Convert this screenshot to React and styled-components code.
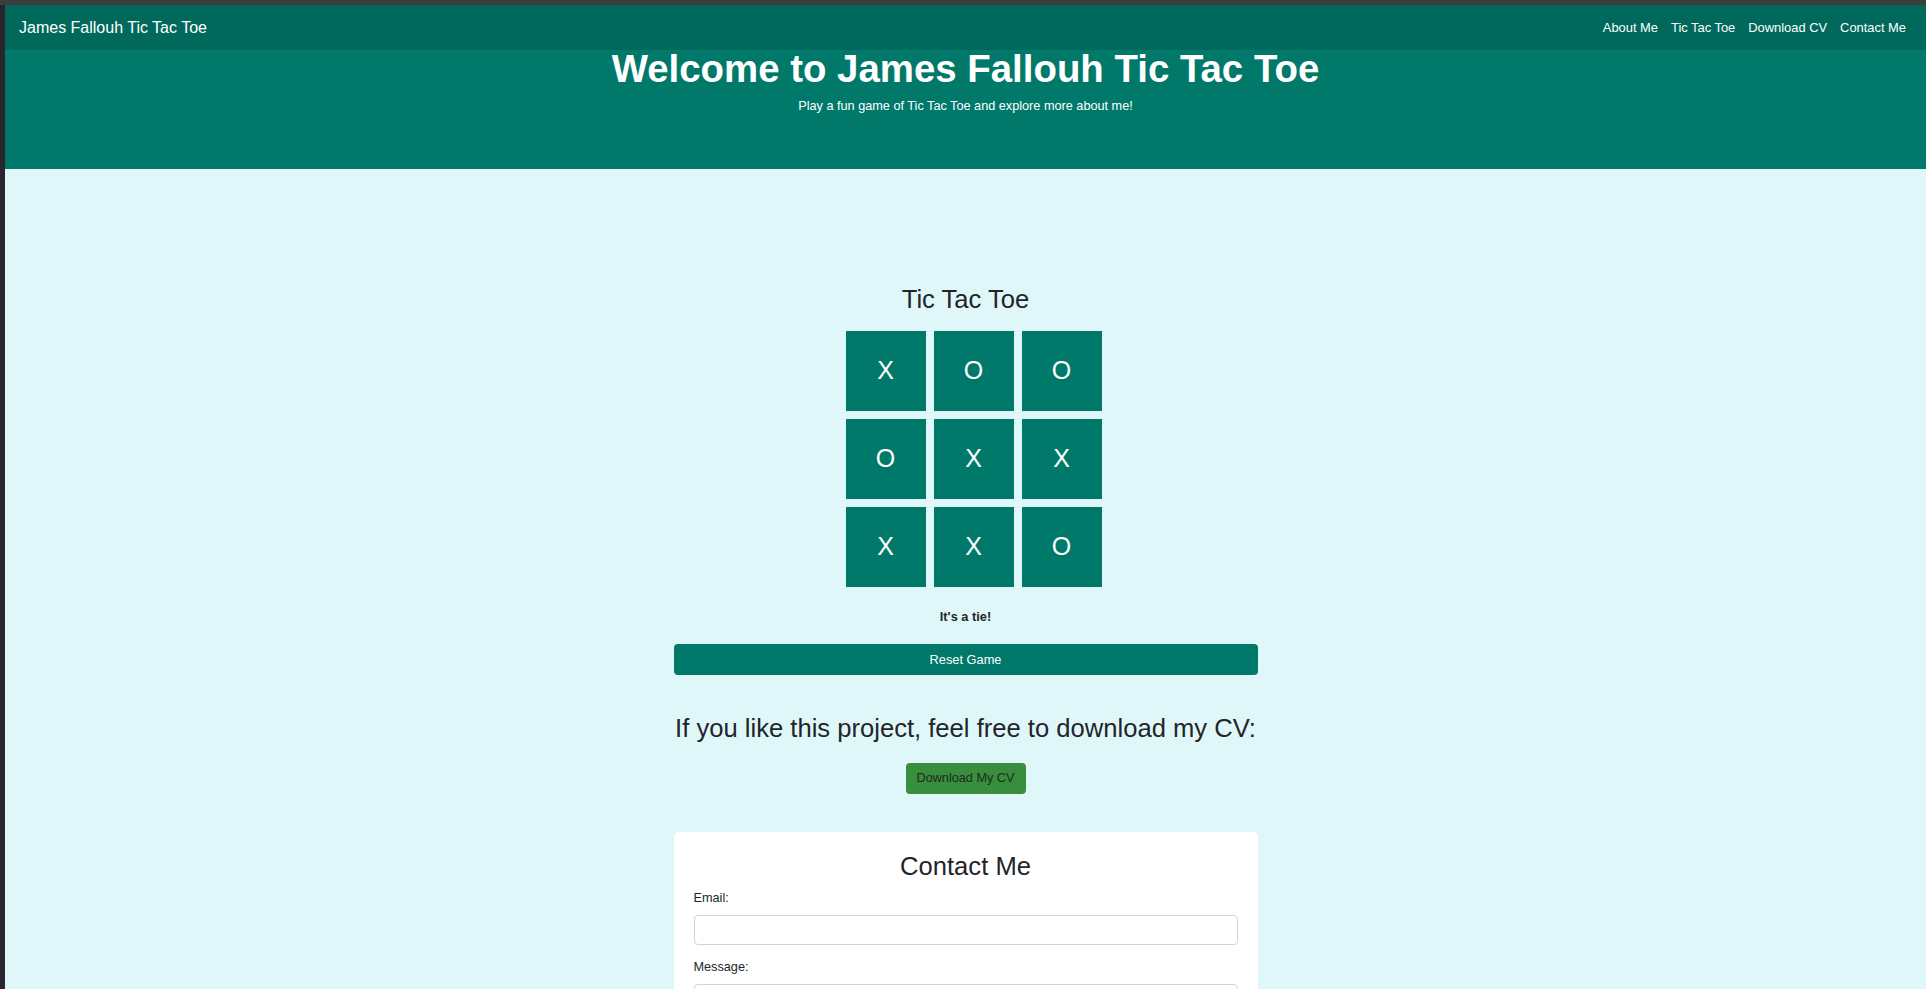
import React, { useState } from "react";
import styled, { createGlobalStyle } from "styled-components";

const GlobalStyle = createGlobalStyle`
  * { box-sizing: border-box; }
  body {
    margin: 0;
    background: #2f2f33;
    font-family: "Liberation Sans", Arial, Helvetica, sans-serif;
    color: #212529;
  }
`;

const Frame = styled.div`
  padding: 5px 0 0 5px;
  background: linear-gradient(#3d3d3d 0 5px, #28262c 5px);
  min-height: 989px;
`;

const Page = styled.div`
  background: #e0f7fa;
  min-height: 984px;
`;

const Navbar = styled.nav`
  height: 45px;
  background: #00695c;
  display: flex;
  align-items: center;
  justify-content: space-between;
  padding: 0 20px 0 14px;
`;

const Brand = styled.a`
  color: #fff;
  font-size: 16px;
  text-decoration: none;
`;

const NavLinks = styled.div`
  display: flex;
  gap: 13px;
`;

const NavLink = styled.a`
  color: #fff;
  font-size: 12.9px;
  text-decoration: none;
`;

const Hero = styled.header`
  height: 119px;
  background: #00796b;
  color: #fff;
  text-align: center;
`;

const HeroTitle = styled.h1`
  margin: 0;
  font-size: 38.4px;
  font-weight: 700;
  line-height: 1;
`;

const HeroText = styled.p`
  margin: 9px 0 0;
  font-size: 12.7px;
  line-height: 1.5;
`;

const Main = styled.main`
  display: flex;
  flex-direction: column;
  align-items: center;
  padding: 115px 0 40px;
`;

const Column = styled.div`
  width: 584px;
  display: flex;
  flex-direction: column;
  align-items: center;
`;

const SectionTitle = styled.h2`
  margin: 0;
  font-size: 25.6px;
  font-weight: 400;
  line-height: 1.2;
  color: #212529;
`;

const Board = styled.div`
  display: grid;
  grid-template-columns: repeat(3, 80px);
  grid-auto-rows: 80px;
  gap: 8px;
  margin: 16px 0 0 16px;
`;

const Cell = styled.button`
  border: none;
  background: #00796b;
  color: #fff;
  font-family: inherit;
  font-size: 25px;
  padding: 0;
  cursor: pointer;
`;

const Status = styled.p`
  margin: 20px 0 0;
  font-size: 12.8px;
  font-weight: 700;
  line-height: 1.5;
`;

const ResetButton = styled.button`
  width: 100%;
  height: 31px;
  margin-top: 18px;
  border: none;
  border-radius: 4px;
  background: #00796b;
  color: #fff;
  font-family: inherit;
  font-size: 12.8px;
  cursor: pointer;
`;

const CvTitle = styled(SectionTitle)`
  margin-top: 38px;
`;

const CvButton = styled.a`
  display: flex;
  align-items: center;
  justify-content: center;
  width: 120px;
  height: 31px;
  margin-top: 19px;
  border-radius: 4px;
  background: #388e3c;
  color: #1d2b1e;
  font-size: 12.7px;
  text-decoration: none;
`;

const Card = styled.section`
  width: 100%;
  margin-top: 38px;
  padding: 19px 20px 20px;
  background: #fff;
  border-radius: 5px;
`;

const CardTitle = styled(SectionTitle)`
  text-align: center;
`;

const Field = styled.div`
  margin-top: ${({ $first }) => ($first ? "8px" : "13px")};
`;

const Label = styled.label`
  display: block;
  margin-bottom: 7px;
  font-size: 12.7px;
  line-height: 1.5;
  color: #212529;
`;

const Input = styled.input`
  display: block;
  width: 100%;
  height: 30px;
  border: 1px solid #ced4da;
  border-radius: 4px;
  padding: 4px 8px;
  font-family: inherit;
  font-size: 13px;
`;

const TextArea = styled.textarea`
  display: block;
  width: 100%;
  height: 90px;
  border: 1px solid #ced4da;
  border-radius: 4px;
  padding: 4px 8px;
  font-family: inherit;
  font-size: 13px;
  resize: vertical;
`;

const SendButton = styled(ResetButton)`
  margin-top: 14px;
`;

const initial = ["X", "O", "O", "O", "X", "X", "X", "X", "O"];

const App = () => {
  const [cells] = useState(initial);

  return (
    <>
      <GlobalStyle />
      <Frame>
        <Page>
          <Navbar>
            <Brand href="#">James Fallouh Tic Tac Toe</Brand>
            <NavLinks>
              <NavLink href="#about">About Me</NavLink>
              <NavLink href="#game">Tic Tac Toe</NavLink>
              <NavLink href="#cv">Download CV</NavLink>
              <NavLink href="#contact">Contact Me</NavLink>
            </NavLinks>
          </Navbar>
          <Hero>
            <HeroTitle>Welcome to James Fallouh Tic Tac Toe</HeroTitle>
            <HeroText>Play a fun game of Tic Tac Toe and explore more about me!</HeroText>
          </Hero>
          <Main>
            <Column>
              <SectionTitle>Tic Tac Toe</SectionTitle>
              <Board>
                {cells.map((c, i) => (
                  <Cell key={i}>{c}</Cell>
                ))}
              </Board>
              <Status>It's a tie!</Status>
              <ResetButton>Reset Game</ResetButton>
              <CvTitle>If you like this project, feel free to download my CV:</CvTitle>
              <CvButton href="#">Download My CV</CvButton>
              <Card>
                <CardTitle>Contact Me</CardTitle>
                <Field $first>
                  <Label>Email:</Label>
                  <Input type="email" />
                </Field>
                <Field>
                  <Label>Message:</Label>
                  <TextArea />
                </Field>
                <SendButton>Send</SendButton>
              </Card>
            </Column>
          </Main>
        </Page>
      </Frame>
    </>
  );
};

export default App;
